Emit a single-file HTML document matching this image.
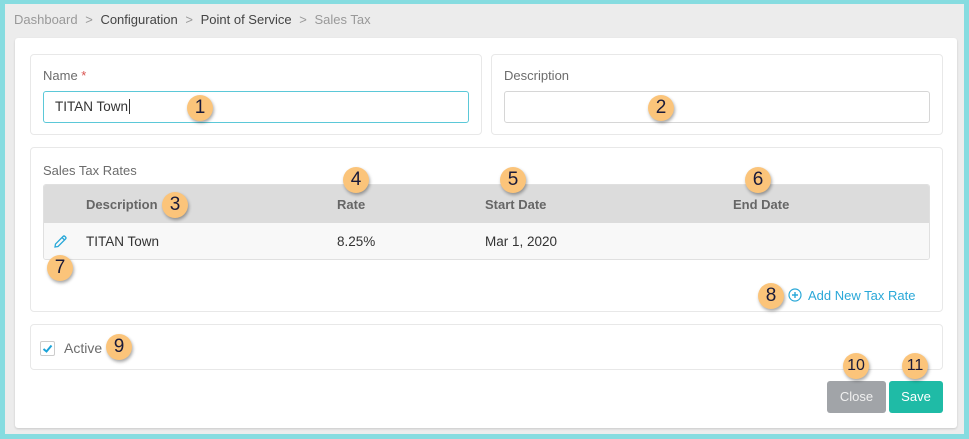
<!DOCTYPE html>
<html><head><style>
*{box-sizing:border-box;margin:0;padding:0}
body{width:969px;height:439px;background:#86dce0;font-family:"Liberation Sans",sans-serif;position:relative;overflow:hidden}
.abs{position:absolute}
#bg{left:5px;top:4px;width:959px;height:430px;background:#ececec}
#card{left:15px;top:38px;width:942px;height:390px;background:#fff;border-radius:3px;box-shadow:0 1px 2px rgba(0,0,0,.15)}
.box{border:1px solid #e8e8e8;border-radius:4px;background:#fff}
.lbl{font-size:13px;color:#6c6c6c}
.inp{border:1px solid #d6d6d6;border-radius:3px;background:#fff}
.b{width:26px;height:26px;border-radius:50%;background:#fbc47a;box-shadow:1px 2px 3px rgba(0,0,0,.35);color:#1a1a3a;font-size:19px;text-align:center;line-height:26px}
.th{font-size:13px;font-weight:bold;color:#666}
.td{font-size:13.5px;color:#333}
</style></head><body>
<div id="bg" class="abs"></div>
<div class="abs" style="left:14px;top:12px;font-size:13px;color:#999;white-space:nowrap">Dashboard <span style="margin:0 4px">&gt;</span> <span style="color:#444">Configuration</span> <span style="margin:0 4px">&gt;</span> <span style="color:#444">Point of Service</span> <span style="margin:0 4px">&gt;</span> Sales Tax</div>
<div id="card" class="abs"></div>

<div class="abs box" style="left:30px;top:54px;width:452px;height:81px"></div>
<div class="abs lbl" style="left:43px;top:68px">Name <span style="color:#d9534f">*</span></div>
<div class="abs inp" style="left:43px;top:91px;width:426px;height:32px;border-color:#5bc8d8"></div>
<div class="abs td" style="left:55px;top:99px">TITAN Town<span style="border-left:1px solid #333;margin-left:1px"></span></div>
<div class="abs b" style="left:187px;top:95px">1</div>

<div class="abs box" style="left:491px;top:54px;width:452px;height:81px"></div>
<div class="abs lbl" style="left:504px;top:68px">Description</div>
<div class="abs inp" style="left:504px;top:91px;width:426px;height:32px"></div>
<div class="abs b" style="left:648px;top:95px">2</div>

<div class="abs box" style="left:30px;top:147px;width:913px;height:165px"></div>
<div class="abs lbl" style="left:43px;top:163px">Sales Tax Rates</div>
<div class="abs" style="left:43px;top:184px;width:887px;height:76px;border:1px solid #e0e0e0;border-radius:3px;overflow:hidden">
<div style="height:38px;background:#dcdcdc"></div><div style="height:37px;background:#f8f8f8"></div></div>
<div class="abs th" style="left:86px;top:197px">Description</div>
<div class="abs th" style="left:337px;top:197px">Rate</div>
<div class="abs th" style="left:485px;top:197px">Start Date</div>
<div class="abs th" style="left:733px;top:197px">End Date</div>
<div class="abs td" style="left:86px;top:234px">TITAN Town</div>
<div class="abs td" style="left:337px;top:234px">8.25%</div>
<div class="abs td" style="left:485px;top:234px">Mar 1, 2020</div>
<svg class="abs" style="left:53px;top:234px" width="15" height="15" viewBox="0 0 15 15"><path d="M2 13 L2.5 10 L10 2.5 Q11 1.5 12 2.5 L12.5 3 Q13.5 4 12.5 5 L5 12.5 Z M9 3.5 L11.5 6" fill="none" stroke="#2aa8d8" stroke-width="1.3"/></svg>
<div class="abs b" style="left:162px;top:192px">3</div>
<div class="abs b" style="left:343px;top:167px">4</div>
<div class="abs b" style="left:500px;top:167px">5</div>
<div class="abs b" style="left:745px;top:167px">6</div>
<div class="abs b" style="left:47px;top:255px">7</div>

<div class="abs b" style="left:758px;top:283px">8</div>
<svg class="abs" style="left:788px;top:288px" width="14" height="14" viewBox="0 0 14 14"><circle cx="7" cy="7" r="6" fill="none" stroke="#2aa8d8" stroke-width="1.2"/><path d="M7 4v6M4 7h6" stroke="#2aa8d8" stroke-width="1.4"/></svg>
<div class="abs" style="left:808px;top:288px;font-size:13px;color:#2aa8d8">Add New Tax Rate</div>

<div class="abs box" style="left:30px;top:324px;width:913px;height:46px"></div>
<div class="abs" style="left:40px;top:341px;width:15px;height:15px;border:1px solid #ccc;border-radius:2px;background:#fff"></div>
<svg class="abs" style="left:42px;top:343px" width="11" height="11" viewBox="0 0 11 11"><path d="M1.5 6 L4.5 8.5 L9.5 2.5" fill="none" stroke="#1aa3d8" stroke-width="2"/></svg>
<div class="abs lbl" style="left:64px;top:340px;font-size:14px">Active</div>
<div class="abs b" style="left:106px;top:334px">9</div>

<div class="abs" style="left:827px;top:381px;width:59px;height:32px;background:#a1a4a8;border-radius:3px;color:#f0f0f0;font-size:13px;text-align:center;line-height:32px">Close</div>
<div class="abs" style="left:889px;top:381px;width:54px;height:32px;background:#1fbba6;border-radius:3px;color:#fff;font-size:13px;text-align:center;line-height:32px">Save</div>
<div class="abs b" style="left:843px;top:353px;font-size:16px">10</div>
<div class="abs b" style="left:902px;top:353px;font-size:16px">11</div>
</body></html>
